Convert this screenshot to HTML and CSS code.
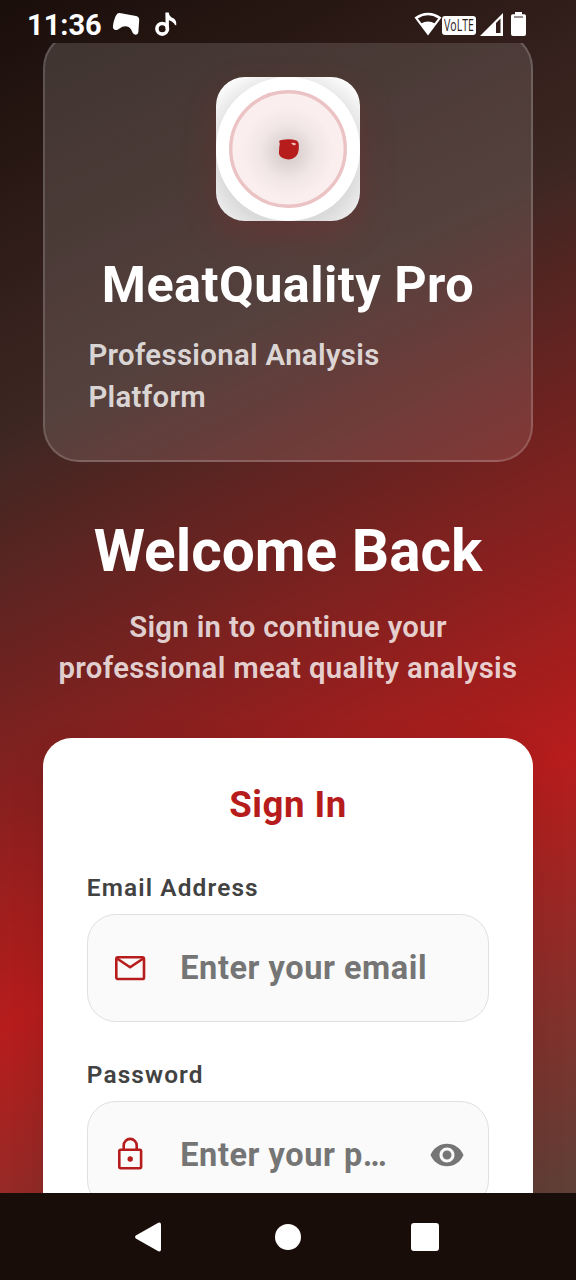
FILE: index.html
```html
<!DOCTYPE html>
<html lang="en">
<head>
<meta charset="utf-8">
<title>MeatQuality Pro</title>
<link rel="stylesheet" href="styles.css">
</head>
<body>
<div class="screen">
  <header class="status">
    <span class="time">11:36</span>
    <svg class="game" width="28" height="24" viewBox="0 0 28 24"><path fill="#fff" d="M5.500 1.500Q7 .6 9 1.300L24 4Q27.400 4.800 27.200 8L26.400 20Q26 23 23.500 22.700Q21.500 22.600 20.500 20.500Q18.500 15 15 14.500Q11 13.800 7.500 16.500Q4.500 19 2.200 17.600Q.3 16.500 1 13.500Q2.300 5 5.500 1.500Z"/></svg>
    <svg class="note" width="22" height="24" viewBox="0 0 22 24"><circle cx="7.200" cy="16.800" r="5.300" fill="none" stroke="#fff" stroke-width="3.600"/><path fill="#fff" d="M10.400.500H13.700Q14.500 5.300 18.500 6.200Q21.800 8 21.200 13.500L19.800 12.800Q18.500 9.800 13.900 8.300V17H10.600Z"/></svg>
    <span class="spacer"></span>
    <svg class="wifi" width="28" height="24" viewBox="0 0 28 24"><path fill="#fff" fill-rule="evenodd" d="M14 .8Q21.500.8 27.500 5.500L14 23.500L.5 5.500Q6.500.8 14 .8ZM14 3.300Q8.600 3.300 3.800 6.500L7.500 11.300Q10.300 9.600 14 9.600T20.500 11.300L24.200 6.500Q19.400 3.300 14 3.300Z"/></svg>
    <span class="volte"><span class="volte-text">VoLTE</span></span>
    <svg class="signal" width="23" height="23" viewBox="0 0 23 23"><path fill="#fff" fill-rule="evenodd" d="M23 0V23H0ZM16 10V20H20.500V5.500Z"/></svg>
    <svg class="battery" width="15" height="24" viewBox="0 0 15 24"><path fill="#fff" d="M4 0H11V2.300H13.500Q15 2.300 15 4V22Q15 24 13 24H2Q0 24 0 22V4Q0 2.300 1.500 2.300H4Z"/><path stroke="#341f1c" stroke-width="1" d="M3 5H12"/></svg>
  </header>
  <main class="viewport">
    <section class="brand">
      <svg class="logo" width="144" height="144" viewBox="0 0 144 144">
        <defs>
          <linearGradient id="tile" x1="0" y1="0" x2="0" y2="1"><stop offset="0" stop-color="#fff"/><stop offset="1" stop-color="#f8f8f8"/></linearGradient>
          <radialGradient id="halo" gradientUnits="userSpaceOnUse" cx="72" cy="80" r="98"><stop offset=".7" stop-color="#000" stop-opacity=".12"/><stop offset="1" stop-color="#000" stop-opacity="0"/></radialGradient>
          <radialGradient id="core"><stop offset="0" stop-color="#000" stop-opacity=".16"/><stop offset=".3" stop-color="#000" stop-opacity=".1"/><stop offset=".6" stop-color="#000" stop-opacity=".035"/><stop offset="1" stop-color="#000" stop-opacity="0"/></radialGradient>
        </defs>
        <rect width="144" height="144" fill="url(#tile)"/>
        <rect width="144" height="144" fill="url(#halo)"/>
        <circle cx="72" cy="72" r="72" fill="#fff"/>
        <circle cx="72" cy="72" r="57.300" fill="#faeeee" stroke="#ebc3c4" stroke-width="3.400"/>
        <circle cx="72" cy="75" r="46" fill="url(#core)"/>
        <path fill="#b71c1c" d="M63.300 65Q62.800 63 65.500 63Q74 61.300 80.500 63.600Q83.200 65 82.800 70Q83 76.500 79.500 79.800Q75.500 83.400 69.500 82Q63.200 80.500 62.900 76L63.300 69.500Q64.500 67.500 63.300 65Z"/>
        <path fill="#efc1b6" d="M75 66Q77.500 65.200 79.800 66.500L79.500 68Q77 68.800 76.300 67.300Z"/>
      </svg>
      <h1 class="name"><span>MeatQuality Pro</span></h1>
      <p class="tagline">Professional Analysis<br>Platform</p>
    </section>
    <h2 class="welcome">Welcome Back</h2>
    <p class="intro">Sign in to continue your<br>professional meat quality analysis</p>
    <section class="form">
      <h3 class="title">Sign In</h3>
      <div class="label">Email Address</div>
      <div class="field">
        <svg class="icon" width="36" height="36" viewBox="0 0 36 36"><rect x="4.300" y="7.300" width="27.700" height="21.700" rx="1.600"/><path d="M5 8.500L18.100 17.300L31.300 8.500"/></svg>
        <span class="hint">Enter your email</span>
      </div>
      <div class="label second">Password</div>
      <div class="field">
        <svg class="icon" width="36" height="36" viewBox="0 0 36 36"><rect x="7.300" y="12.700" width="21.800" height="18.500" rx="1.400"/><path d="M11.700 12.500V8.400A6.500 6.500 0 0 1 24.700 8.400V12.500"/><circle class="keyhole" cx="18.200" cy="22" r="2.700"/></svg>
        <span class="hint">Enter your p…</span>
        <svg class="eye" width="36" height="36" viewBox="0 0 24 24"><path fill="#757575" d="M12 4.500C7 4.500 2.730 7.610 1 12c1.730 4.390 6 7.500 11 7.500s9.270-3.110 11-7.500c-1.730-4.390-6-7.500-11-7.500zM12 17c-2.760 0-5-2.240-5-5s2.240-5 5-5 5 2.240 5 5-2.240 5-5 5zm0-8c-1.660 0-3 1.340-3 3s1.340 3 3 3 3-1.340 3-3-1.340-3-3-3z"/></svg>
      </div>
    </section>
  </main>
  <nav class="navbar">
    <svg width="26" height="30" viewBox="0 0 26 30"><path fill="#fff" d="M.8 13.600L23.300.7Q26 0 26 2.500V27.500Q26 30 23.300 29.300L.8 16.400Q-.6 15 .8 13.600Z"/></svg>
    <span class="home"></span>
    <span class="recent"></span>
  </nav>
</div>
</body>
</html>
```

FILE: styles.css
```css
* { box-sizing: border-box; margin: 0; padding: 0; }
body { font-family: Roboto, "Liberation Sans", sans-serif; background: #190d09; }
svg { display: block; flex: none; }
.screen {
  width: 576px; height: 1280px; overflow: hidden;
  display: grid; grid-template-rows: 43px 1150px 87px;
  background: linear-gradient(154.230deg, #1a0e0a 0%, #3e2723 30%, #b71c1c 70%, #5d4037 100%) 0 0 / 576px 1193px no-repeat #190d09;
}
.status { display: flex; align-items: flex-start; padding: 12px 50px 0 27px; color: #fff; }
.time { width: 85px; font-size: 29px; font-weight: 700; line-height: 27px; white-space: nowrap; }
.note { margin-left: 15px; }
.spacer { flex: 1; }
.volte { display: flex; justify-content: center; align-items: center; width: 34px; height: 19px; margin-top: 4px; border-radius: 3px; background: #fff; }
.volte-text { flex: none; font: 500 15.500px/19px "Open Sans", sans-serif; color: #2b1a17; transform: scaleX(.68); }
.signal { margin: 1px 0 0 4px; }
.battery { margin-left: 8px; }
.viewport { overflow: hidden; padding: 0 43.200px; }
.brand {
  margin-top: -11px; height: 429.500px; padding: 43px 43.200px 0; border: 2px solid rgba(255,255,255,.17);
  border-radius: 36px; background: linear-gradient(154deg, rgba(255,255,255,.15), rgba(255,255,255,.1));
}
.logo { margin: 0 auto; border-radius: 28.800px; box-shadow: 0 14px 36px rgba(183,28,28,.18); }
.name { display: flex; justify-content: center; margin-top: 34.300px; font-size: 50.400px; line-height: 60px; letter-spacing: .450px; color: #fff; white-space: nowrap; }
.tagline { margin-top: 20px; font-size: 29.300px; font-weight: 600; line-height: 41.400px; letter-spacing: .350px; color: rgba(255,255,255,.8); white-space: nowrap; }
.welcome { margin-top: 55.200px; text-align: center; font-size: 58.600px; line-height: 68px; color: #fff; white-space: nowrap; }
.intro { margin: 22.500px -20px 0; text-align: center; font-size: 29.300px; font-weight: 600; line-height: 40.700px; letter-spacing: .330px; color: rgba(255,255,255,.8); white-space: nowrap; }
.form { margin-top: 49px; height: 560px; padding: 46.500px 43.600px 0; border-radius: 28.800px; background: #fff; box-shadow: 0 14px 36px rgba(0,0,0,.1); }
.title { text-align: center; font-size: 36.600px; line-height: 42px; letter-spacing: .5px; color: #b71c1c; }
.label { margin-top: 48px; font-size: 24.400px; font-weight: 600; line-height: 28px; letter-spacing: 1.130px; color: #424242; white-space: nowrap; }
.second { margin-top: 39px; }
.field { display: flex; align-items: center; height: 108px; margin-top: 12px; padding: 0 23.500px 0 24px; border: 1.800px solid #e0e0e0; border-radius: 28.800px; background: #fafafa; }
.icon { fill: none; stroke: #b71c1c; stroke-width: 2.600px; }
.keyhole { fill: #b71c1c; stroke: none; }
.hint { margin-left: 32.500px; font-size: 32.500px; font-weight: 700; line-height: 40px; letter-spacing: .550px; color: #757575; white-space: nowrap; }
.eye { margin-left: auto; }
.navbar { display: flex; align-items: center; padding-left: 135px; background: #190d09; }
.home { width: 26px; height: 26px; margin-left: 114px; border-radius: 50%; background: #fff; }
.recent { width: 28px; height: 28px; margin-left: 110px; border-radius: 3px; background: #fff; }
```
